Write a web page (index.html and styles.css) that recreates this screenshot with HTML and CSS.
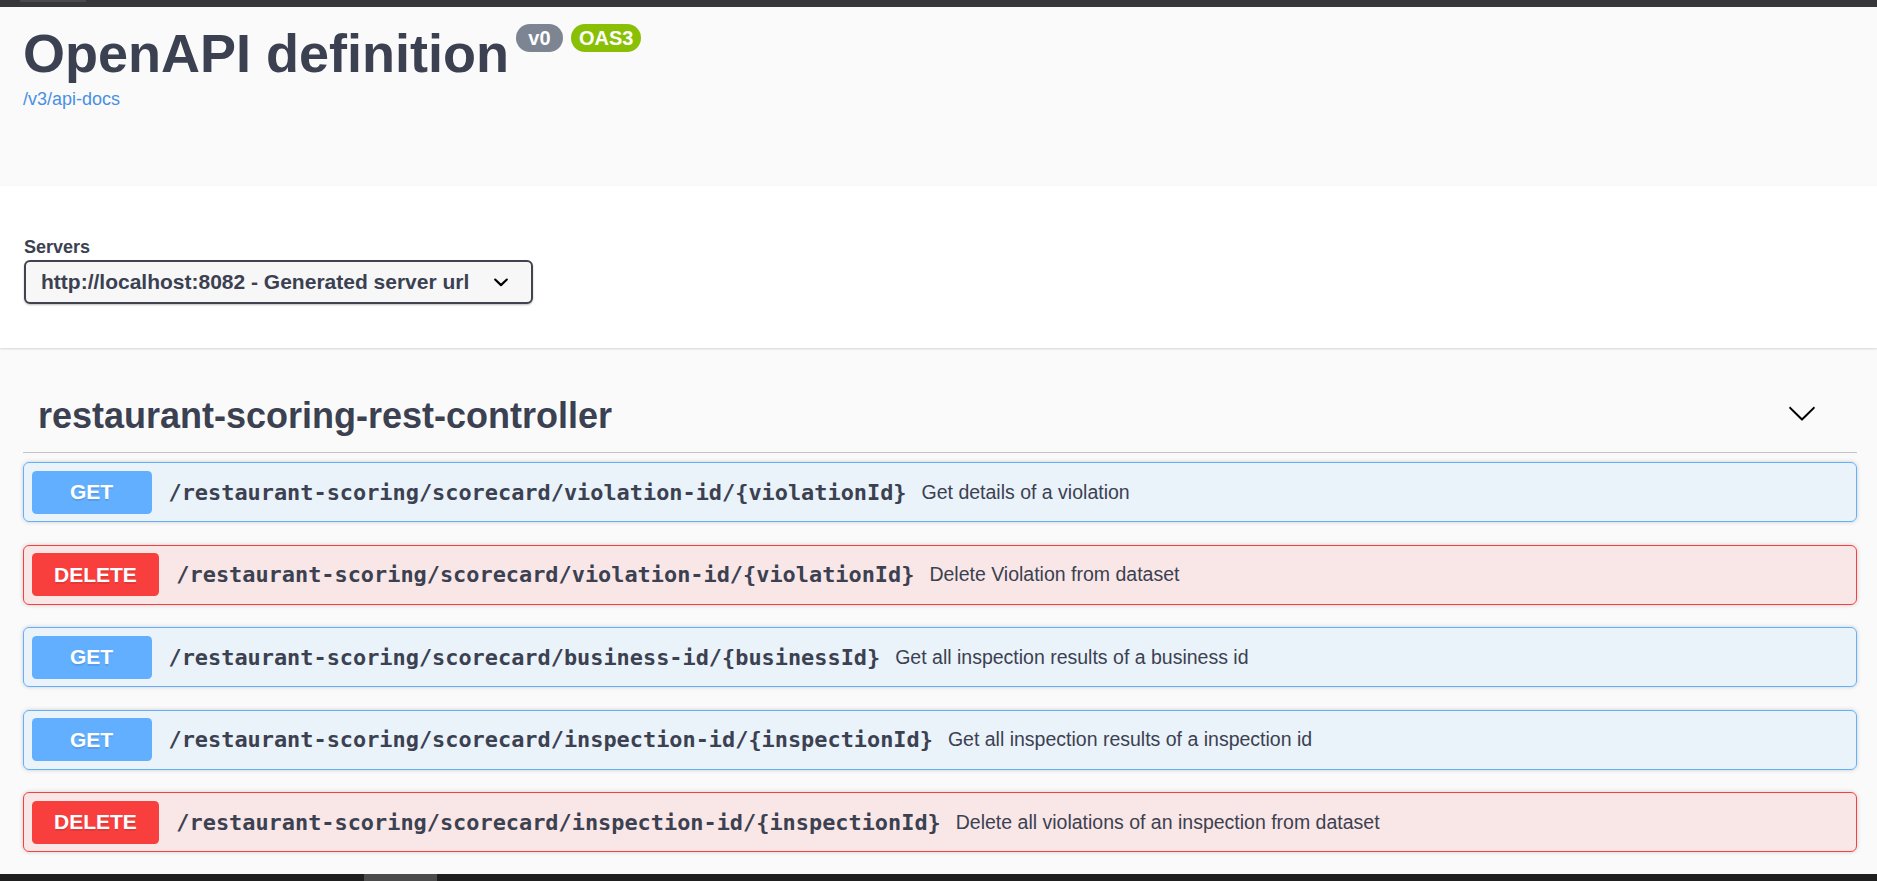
FILE: index.html
```html
<!DOCTYPE html>
<html lang="en">
<head>
<meta charset="utf-8">
<title>Swagger UI</title>
<link rel="stylesheet" href="styles.css">
</head>
<body>
<div class="topbar"><span class="topbar-tab"></span></div>

<section class="info">
  <div class="title-row">
    <h2 class="title">OpenAPI definition</h2>
    <div class="badges">
      <span class="badge badge-version">v0</span>
      <span class="badge badge-oas">OAS3</span>
    </div>
  </div>
  <a class="api-link" href="#">/v3/api-docs</a>
</section>

<section class="schemes">
  <span class="servers-title">Servers</span>
  <div class="select">
    <span>http://localhost:8082 - Generated server url</span>
    <svg class="select-arrow" width="30" height="30" viewBox="0 0 20 20"><path d="M13.418 7.859a.695.695 0 0 1 .978 0 .68.68 0 0 1 0 .969l-3.908 3.83a.697.697 0 0 1-.979 0l-3.908-3.830a.68.68 0 0 1 0-.969.695.695 0 0 1 .978 0L10 11l3.418-3.141z" fill="#000"/></svg>
  </div>
</section>

<section class="tag-section">
  <div class="tag">
    <h3 class="tag-name">restaurant-scoring-rest-controller</h3>
    <svg class="tag-arrow" width="30" height="30" viewBox="0 0 20 20"><path d="M17.418 6.109c.272-.268.709-.268.979 0s.271.701 0 .969l-7.908 7.83c-.27.268-.707.268-.979 0l-7.908-7.83c-.27-.268-.27-.701 0-.969.271-.268.709-.268.979 0L10 13.25l7.418-7.141z" fill="#000"/></svg>
  </div>

  <div class="opblock get">
    <span class="method">GET</span>
    <span class="path">/restaurant-scoring/scorecard/violation-id/{violationId}</span>
    <span class="desc">Get details of a violation</span>
  </div>
  <div class="opblock delete">
    <span class="method">DELETE</span>
    <span class="path">/restaurant-scoring/scorecard/violation-id/{violationId}</span>
    <span class="desc">Delete Violation from dataset</span>
  </div>
  <div class="opblock get">
    <span class="method">GET</span>
    <span class="path">/restaurant-scoring/scorecard/business-id/{businessId}</span>
    <span class="desc">Get all inspection results of a business id</span>
  </div>
  <div class="opblock get">
    <span class="method">GET</span>
    <span class="path">/restaurant-scoring/scorecard/inspection-id/{inspectionId}</span>
    <span class="desc">Get all inspection results of a inspection id</span>
  </div>
  <div class="opblock delete">
    <span class="method">DELETE</span>
    <span class="path">/restaurant-scoring/scorecard/inspection-id/{inspectionId}</span>
    <span class="desc">Delete all violations of an inspection from dataset</span>
  </div>
</section>

<div class="taskbar"><span class="task-item"></span></div>
</body>
</html>
```

FILE: styles.css
```css
* { box-sizing: border-box; }
html, body { margin: 0; padding: 0; }
body {
  width: 1877px;
  height: 881px;
  overflow: hidden;
  background: #fafafa;
  font-family: "Liberation Sans", Arial, sans-serif;
  color: #3b4151;
}

.topbar {
  height: 7px;
  background: #37373b;
  position: relative;
}
.topbar-tab {
  position: absolute;
  left: 20px;
  top: 0;
  width: 66px;
  height: 2px;
  background: #4a4a4e;
}

.info {
  height: 179px;
  padding: 19px 20px 0 23px;
}
.title-row {
  display: flex;
  align-items: flex-start;
}
.title {
  margin: 0;
  font-size: 54px;
  line-height: 54px;
  font-weight: 700;
  color: #3b4151;
}
.badges {
  display: flex;
  gap: 8px;
  margin: -2px 0 0 7px;
}
.badge {
  display: inline-block;
  height: 28px;
  line-height: 28px;
  min-width: 47px;
  padding: 0 8px;
  text-align: center;
  border-radius: 57px;
  color: #fff;
  font-weight: 700;
  font-size: 20px;
}
.badge-version { background: #7d8492; }
.badge-oas { background: #89bf04; }
.api-link {
  display: inline-block;
  margin-top: 8px;
  font-size: 18px;
  line-height: 22px;
  color: #4990e2;
  text-decoration: none;
}

.schemes {
  height: 162px;
  background: #fff;
  box-shadow: 0 1px 2px 0 rgba(0, 0, 0, .15);
  padding: 51px 20px 44px 24px;
  position: relative;
}
.servers-title {
  display: block;
  font-size: 18px;
  line-height: 21px;
  font-weight: 700;
}
.select {
  margin-top: 2px;
  width: 509px;
  height: 44px;
  border: 2px solid #41444e;
  border-radius: 6px;
  background: #f7f7f7;
  box-shadow: 0 1px 2px 0 rgba(0, 0, 0, .25);
  display: flex;
  align-items: center;
  justify-content: space-between;
  padding: 0 15px 0 15px;
  font-size: 21px;
  font-weight: 700;
  color: #3b4151;
}
.select-arrow { display: block; }

.tag-section {
  padding: 0 20px 0 23px;
  margin-top: 31px;
}
.tag {
  display: flex;
  align-items: center;
  justify-content: space-between;
  padding: 15px 40px 15px 15px;
  border-bottom: 1px solid rgba(59, 65, 81, .3);
  margin-bottom: 9px;
}
.tag-name {
  margin: 0;
  font-size: 36px;
  line-height: 43px;
  font-weight: 700;
  color: #3b4151;
}
.tag-arrow { display: block; margin-top: -5px; }

.opblock {
  display: flex;
  align-items: center;
  height: 60px;
  padding: 7.5px;
  margin-bottom: 22.5px;
  border: 1px solid;
  border-radius: 6px;
  box-shadow: 0 0 4.5px rgba(0, 0, 0, .19);
}
.opblock.get {
  border-color: #61affe;
  background: rgba(97, 175, 254, .1);
}
.opblock.delete {
  border-color: #f93e3e;
  background: rgba(249, 62, 62, .1);
}
.method {
  min-width: 120px;
  height: 100%;
  padding: 0 22.5px;
  display: flex;
  align-items: center;
  justify-content: center;
  border-radius: 4.5px;
  color: #fff;
  font-size: 21px;
  font-weight: 700;
  text-shadow: 0 1.5px 0 rgba(0, 0, 0, .1);
}
.get .method { background: #61affe; }
.delete .method { background: #f93e3e; }
.path {
  margin-left: 17px;
  font-family: "DejaVu Sans Mono", "Liberation Mono", monospace;
  font-size: 21.9px;
  font-weight: 700;
  color: #3b4151;
}
.desc {
  margin-left: 15px;
  font-size: 19.5px;
  color: #3b4151;
}

.taskbar {
  position: fixed;
  left: 0;
  right: 0;
  bottom: 0;
  height: 7px;
  background: #1f1f1f;
}
.task-item {
  position: absolute;
  left: 364px;
  top: 0;
  width: 73px;
  height: 7px;
  background: #4b4b4b;
}
```
